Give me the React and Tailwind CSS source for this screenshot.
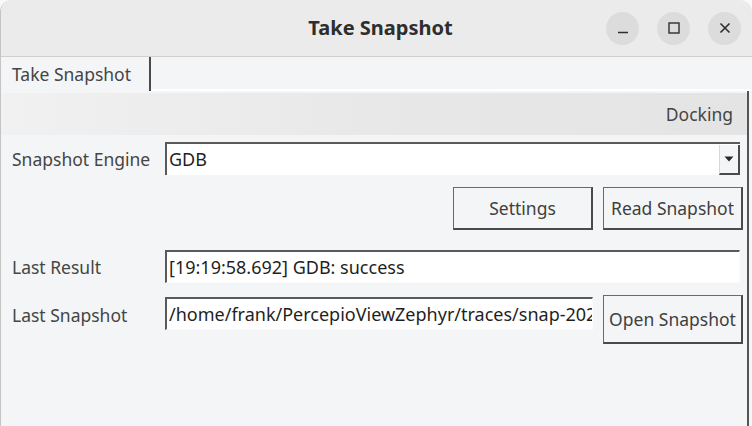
import React from 'react';

const font = { fontFamily: '"Noto Sans", "Open Sans", sans-serif' };

function Field({ children, className = '' }) {
  return (
    <div
      className={`h-[33px] bg-white border-t-2 border-l-2 border-[#5a5a5a] border-b border-r border-b-[#fbfbfb] border-r-[#fbfbfb] flex items-center pl-[2px] overflow-hidden whitespace-nowrap text-[18px] text-[#1f1f1f] ${className}`}
    >
      {children}
    </div>
  );
}

function Button({ children, className = '' }) {
  return (
    <div
      className={`h-[43px] w-[140px] flex items-center justify-center border border-[#6a6a6a] border-r-2 border-b-2 border-r-[#4a4a4a] border-b-[#4a4a4a] bg-[#f4f5f7] text-[17.5px] text-[#3f3f3f] whitespace-nowrap ${className}`}
    >
      {children}
    </div>
  );
}

function TitleButton({ children }) {
  return (
    <div className="w-[33px] h-[33px] rounded-full bg-[#dcdcdc] flex items-center justify-center text-[#2e2e2e]">
      {children}
    </div>
  );
}

export default function App() {
  return (
    <div style={font} className="w-[752px] h-[426px] bg-[#fafafa] overflow-hidden">
      <div className="w-[752px] h-[426px] flex flex-col rounded-t-[12px] overflow-hidden border-l border-[#c4c4c4] bg-[#f4f5f7]">
        {/* title bar */}
        <div className="h-[57px] shrink-0 bg-[#ebebeb] border-b border-[#cfcfcf] flex items-center">
          <div className="w-[160px]" />
          <div className="flex-1 text-center text-[20px] font-bold text-[#2e2e2e] pl-[8px]">Take Snapshot</div>
          <div className="w-[160px] flex items-center gap-[18px] pl-[14px]">
            <TitleButton>
              <svg width="12" height="12" viewBox="0 0 12 12">
                <path d="M1 10.5h10" stroke="currentColor" strokeWidth="1.6" />
              </svg>
            </TitleButton>
            <TitleButton>
              <svg width="12" height="12" viewBox="0 0 12 12">
                <rect x="1" y="1" width="10" height="10" fill="none" stroke="currentColor" strokeWidth="1.4" />
              </svg>
            </TitleButton>
            <TitleButton>
              <svg width="12" height="12" viewBox="0 0 12 12">
                <path d="M1.5 1.5l9 9M10.5 1.5l-9 9" stroke="currentColor" strokeWidth="1.6" />
              </svg>
            </TitleButton>
          </div>
        </div>

        {/* tab bar */}
        <div className="h-[34px] shrink-0 flex pl-[2px]">
          <div className="w-[148px] border-r-2 border-[#4a4a4a] flex items-center pl-[9px] text-[17.5px] text-[#454545]">
            Take Snapshot
          </div>
          <div className="flex-1 border-b-2 border-white" />
        </div>

        {/* pane */}
        <div className="flex-1 flex flex-col border-r-2 border-[#555] mr-[3px]">
          <div className="h-[42px] mt-[2px] shrink-0 bg-gradient-to-r from-[#f1f1f1] via-[#e8e8e8] to-[#e4e4e4] flex items-center justify-end pr-[14px] text-[17.5px] text-[#454545]">
            Docking
          </div>

          <div className="flex flex-col pl-[11px] pr-[4px] pt-[7px]">
            <div className="flex items-center">
              <div className="w-[153px] text-[17.5px] text-[#454545] pt-[1px]">Snapshot Engine</div>
              <div className="flex-1 mr-[3px] h-[33px] bg-white border-t-2 border-l-2 border-[#5a5a5a] flex items-center relative">
                <span className="pl-[2px] text-[18px] text-[#1f1f1f]">GDB</span>
                <div className="ml-auto h-[30px] w-[21px] bg-[#f4f5f7] border-l border-[#d8d8d8] border-b-2 border-r-2 border-b-[#4a4a4a] border-r-[#4a4a4a] flex items-center justify-center">
                  <svg width="10" height="6" viewBox="0 0 10 6">
                    <path d="M0.5 0.5h9L5 5.5z" fill="#2a2a2a" />
                  </svg>
                </div>
              </div>
            </div>

            <div className="flex justify-end gap-[10px] mt-[12px]">
              <Button>Settings</Button>
              <Button>Read Snapshot</Button>
            </div>

            <div className="flex items-center mt-[20px]">
              <div className="w-[153px] text-[17.5px] text-[#454545] pt-[1px]">Last Result</div>
              <Field className="flex-1 mr-[3px]">[19:19:58.692] GDB: success</Field>
            </div>

            <div className="flex items-start mt-[12px]">
              <div className="w-[153px] text-[17.5px] text-[#454545] mt-[7px]">Last Snapshot</div>
              <Field className="flex-1 min-w-0 mt-[2px]">/home/frank/PercepioViewZephyr/traces/snap-2024</Field>
              <Button className="ml-[10px] h-[49px] shrink-0">Open Snapshot</Button>
            </div>
          </div>
        </div>
      </div>
    </div>
  );
}
